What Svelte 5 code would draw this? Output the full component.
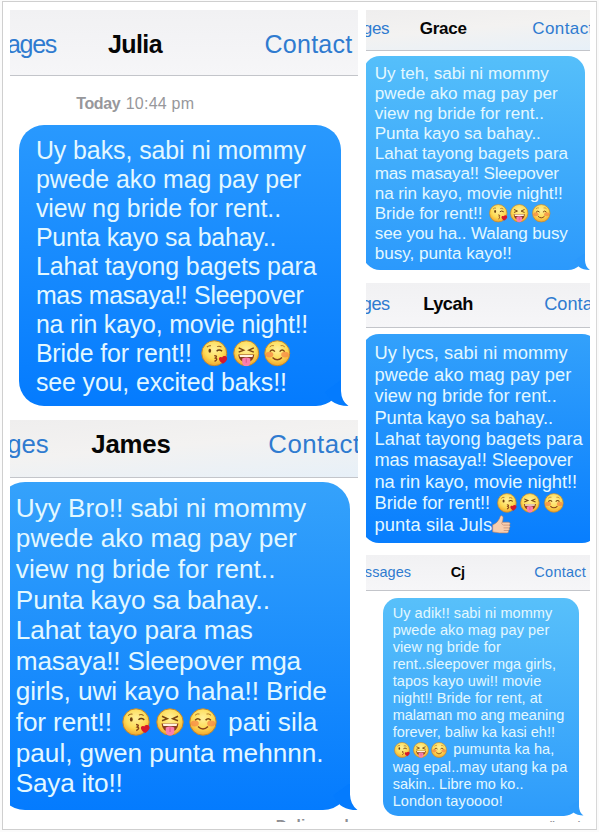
<script>
  // Text segment: [text, inkStart, inkEnd]; emoji segment: [kind, centre, size].
  const T = (text, a, b) => ({ text, a, b });
  const E = (kind, c, d) => ({ kind, a: c - d / 2, b: c + d / 2 });
  const trio = (c1, c2, c3, d) => [E('kiss', c1, d), E('tongue', c2, d), E('smile', c3, d)];

  const columns = [
    {
      x: 9.5,
      w: 348.5,
      chats: [
        {
          bar: 66, height: 410, size: 24.9, barSize: 25, base: 43, tint: 'plain',
          nav: [T('ages', 8, 55), T('Julia', 109, 161), T('Contact', 265.5, 351.5)],
          stamp: [T('Today', 77, 119.5), T('10:44 pm', 126.5, 193.5)],
          bubble: { x: 19, w: 322, gap: 0, h: 281, r: 25, from: '#2999fe', to: '#047bfe', pad: 10.8, lh: 29, tail: 1 },
          lines: [
            [T('Uy baks, sabi ni mommy', 37, 304.7)],
            [T('pwede ako mag pay per', 37, 300)],
            [T('view ng bride for rent..', 37, 280)],
            [T('Punta kayo sa bahay..', 37, 275)],
            [T('Lahat tayong bagets para', 37, 315.5)],
            [T('mas masaya!! Sleepover', 37, 302.5)],
            [T('na rin kayo, movie night!!', 37, 307)],
            [T('Bride for rent!!', 37, 190.7), ...trio(214.7, 246, 277, 26.5)],
            [T('see you, excited baks!!', 37, 285.7)]
          ]
        },
        {
          bar: 58.5, height: 402, size: 26.2, barSize: 25.8, base: 33.3, tint: 'warm',
          nav: [T('ges', 8.5, 47.3), T('James', 92.5, 169.5), T('Contact', 269.5, 359.5)],
          bubble: { x: -2, w: 351.5, gap: 3.5, h: 328.5, r: 27, from: '#35a2fb', to: '#047bfe', pad: 11.3, lh: 30.62, tail: 1.05 },
          lines: [
            [T('Uyy Bro!! sabi ni mommy', 17, 305)],
            [T('pwede ako mag pay per', 17, 295.7)],
            [T('view ng bride for rent..', 17, 274.3)],
            [T('Punta kayo sa bahay..', 17, 268.7)],
            [T('Lahat tayo para mas', 17, 251.7)],
            [T('masaya!! Sleepover mga', 17, 299.7)],
            [T('girls, uwi kayo haha!! Bride', 17, 325.7)],
            [T('for rent!!', 17, 110.7), ...trio(136.5, 169.7, 203, 28), T('pati sila', 229.3, 316.3)],
            [T('paul, gwen punta mehnnn.', 17, 322.3)],
            [T('Saya ito!!', 17, 121.3)]
          ],
          status: { x: 276.5, end: 348.5, size: 15.5, gap: 5.5 }
        }
      ]
    },
    {
      x: 366,
      w: 223.5,
      chats: [
        {
          bar: 41.5, height: 273.5, size: 17.1, barSize: 17, base: 25, tint: 'warm',
          nav: [T('ges', 363.5, 388.5), T('Grace', 420.5, 466), T('Contact', 533, 593)],
          bubble: { x: 362.5, w: 222.5, gap: 5, h: 214, r: 17, from: '#55bffa', to: '#2b99fc', pad: 7.6, lh: 20, tail: 0.65 },
          lines: [
            [T('Uy teh, sabi ni mommy', 375.5, 548)],
            [T('pwede ako mag pay per', 375.5, 557)],
            [T('view ng bride for rent..', 375.5, 543.3)],
            [T('Punta kayo sa bahay..', 375.5, 540)],
            [T('Lahat tayong bagets para', 375.5, 567.3)],
            [T('mas masaya!! Sleepover', 375.5, 558)],
            [T('na rin kayo, movie night!!', 375.5, 562)],
            [T('Bride for rent!!', 375.5, 481.7), ...trio(498, 519.7, 541.3, 18.5)],
            [T('see you ha.. Walang busy', 375.5, 567)],
            [T('busy, punta kayo!!', 375.5, 511)]
          ]
        },
        {
          bar: 45, height: 272, size: 18.3, barSize: 18.2, base: 27.5, tint: 'plain',
          nav: [T('ges', 362.5, 389), T('Lycah', 424, 472), T('Conta', 545, 592)],
          bubble: { x: 362, w: 237, gap: 5.5, h: 209, r: 17, from: '#33a1fb', to: '#087efe', pad: 8.8, lh: 21.42, tail: 0 },
          lines: [
            [T('Uy lycs, sabi ni mommy', 375.3, 567)],
            [T('pwede ako mag pay per', 375.3, 570.7)],
            [T('view ng bride for rent..', 375.3, 556)],
            [T('Punta kayo sa bahay..', 375.3, 552.3)],
            [T('Lahat tayong bagets para', 375.3, 582)],
            [T('mas masaya!! Sleepover', 375.3, 572)],
            [T('na rin kayo, movie night!!', 375.3, 576.3)],
            [T('Bride for rent!!', 375.3, 489.3), ...trio(507, 530.3, 553.7, 19.8)],
            [T('punta sila Juls', 375.3, 491.5), E('thumb', 502, 19)]
          ]
        },
        {
          bar: 35.5, height: 266.5, size: 14.5, barSize: 14.5, base: 22.3, tint: 'plain',
          nav: [T('ssages', 365.5, 410.5), T('Cj', 451.5, 464), T('Contact', 535, 585.5)],
          bubble: { x: 383, w: 196, gap: 7.5, h: 217.5, r: 15, from: '#58c0fa', to: '#2d9bfb', pad: 6.6, lh: 17.12, tail: 0.6 },
          lines: [
            [T('Uy adik!! sabi ni mommy', 393.3, 551.7)],
            [T('pwede ako mag pay per', 393.3, 548.7)],
            [T('view ng bride for', 393.3, 500.3)],
            [T('rent..sleepover mga girls,', 393.3, 555.3)],
            [T('tapos kayo uwi!! movie', 393.3, 540.7)],
            [T('night!! Bride for rent, at', 393.3, 541.3)],
            [T('malaman mo ang meaning', 393.3, 563.7)],
            [T('forever, baliw ka kasi eh!!', 393.3, 554.3)],
            [...trio(402.3, 420.7, 439.3, 16), T('pumunta ka ha,', 454, 553.7)],
            [T('wag epal..may utang ka pa', 393.3, 566.7)],
            [T('sakin.. Libre mo ko..', 393.3, 523)],
            [T('London tayoooo!', 393.3, 502.3)]
          ],
          status: { x: 538, end: 580, size: 9.5, gap: 3.5 }
        }
      ]
    }
  ];

  // Turns absolute ink extents into flow gaps and widths.
  function place(items, origin, size) {
    let cursor = origin;
    return items.map((it) => {
      const a = it.text ? it.a - size * 0.045 : it.a;
      const b = it.text ? it.b + size * 0.045 : it.b;
      const out = { ...it, gap: a - cursor, w: b - a };
      cursor = b;
      return out;
    });
  }

  // Tracks a run of text so that it fills its box exactly.
  function track(node, width) {
    const natural = node.firstElementChild.getBoundingClientRect().width;
    const n = node.textContent.length;
    node.style.letterSpacing = (width - natural) / n + 'px';
  }
</script>

{#snippet icon(kind)}
  {#if kind === 'thumb'}
    <svg viewBox="0 0 28 28">
      <path d="M1 14.5 C4 13 6 12 8 9.8 C10 7.5 11.5 5 12.3 2 C13 .2 16 .8 16.3 3.6 C16.5 6 15.8 8.6 15 10.6 L24 10.6 C27.3 10.8 27.5 14.3 25 14.9 C27.4 15.6 27 18.8 24.7 19 C26.4 19.8 26 22.6 23.8 22.8 C25 24 24.2 26.4 22 26.4 L11 26.4 C7 26.2 5 25 1 25Z" fill="#f7ceb0" stroke="#b98165" stroke-width=".9" />
      <path d="M16.5 14.9 H25 M17 19 H24.5 M17.3 22.8 H23.6 M15 10.7 C13.8 12.2 14.2 13.4 16 14.5" fill="none" stroke="#c78c70" stroke-width="1.1" />
    </svg>
  {:else}
    <svg viewBox="0 0 28 28">
      <circle cx="14" cy="14" r="13.2" fill="url(#skin)" stroke="#c5872a" stroke-width="1" />
      {#if kind === 'kiss'}
        <ellipse cx="9.3" cy="11.4" rx="1.4" ry="2.2" fill="#6b3d10" />
        <path d="M6.2 7.6 Q8 5.6 10.5 6.2 M17 7 Q19.5 5.8 21.6 7.6" fill="none" stroke="#9a6420" stroke-width="1.1" />
        <path d="M16.5 11.8 Q19 9.4 22.3 11.8" fill="none" stroke="#6b3d10" stroke-width="1.5" />
        <path d="M14 16.5 Q18 16.8 15.2 19 Q18.5 20 14.3 22.6" fill="none" stroke="#8a431a" stroke-width="1.5" />
        <path d="M23.2 25 C17 21.8 18.3 16.6 22.2 18.4 C24.8 14.9 29 18.2 27.2 21 C26.3 22.8 24.8 24 23.2 25Z" fill="#d7192b" />
      {:else if kind === 'tongue'}
        <path d="M6 8.3 L11.3 10.7 L6 12.8 M22 8.3 L16.7 10.7 L22 12.8" fill="none" stroke="#7a4713" stroke-width="1.5" />
        <path d="M5.5 15.4 H22.5 Q21.5 23.8 14 23.8 Q6.5 23.8 5.5 15.4Z" fill="#8b3d1c" />
        <path d="M6.8 15.8 H21.2 L20.6 18 H7.4Z" fill="#fff3df" />
        <path d="M9.7 19.6 Q14 17.3 18.3 19.6 V23.5 Q18 27.6 14 27.6 Q10 27.6 9.7 23.5Z" fill="#fb7fae" />
        <path d="M14 19.5 V24" stroke="#da4f83" stroke-width=".9" />
      {:else}
        <ellipse cx="5.8" cy="15.4" rx="4" ry="3" fill="#f78345" opacity=".7" />
        <ellipse cx="22.2" cy="15.4" rx="4" ry="3" fill="#f78345" opacity=".7" />
        <path d="M6 7.3 Q8 5.2 10.5 6 M17.5 6 Q20 5.2 22 7.3" fill="none" stroke="#b27a2b" stroke-width="1" />
        <path d="M6.2 12.3 Q8.8 9 11.4 12.3 M16.6 12.3 Q19.2 9 21.8 12.3" fill="none" stroke="#7a4713" stroke-width="1.5" />
        <path d="M9 18.5 Q14 23.4 19 18.5" fill="none" stroke="#8a431a" stroke-width="1.5" />
      {/if}
    </svg>
  {/if}
{/snippet}

{#snippet run(items, origin, size)}
  {#each place(items, origin, size) as s}
    {#if s.text}
      <span class="text" style="margin-left:{s.gap}px;width:{s.w}px" use:track={s.w}><span>{s.text}</span></span>
    {:else}
      <span class="emoji" style="margin-left:{s.gap}px;width:{s.w}px;height:{s.w}px">{@render icon(s.kind)}</span>
    {/if}
  {/each}
{/snippet}

<div class="page">
  <svg class="defs" width="0" height="0">
    <defs>
      <radialGradient id="skin" cx=".5" cy=".35" r=".65">
        <stop offset="0" stop-color="#fff09a" />
        <stop offset=".6" stop-color="#fddb55" />
        <stop offset="1" stop-color="#f2a52c" />
      </radialGradient>
    </defs>
  </svg>
  <div class="frame">
    {#each columns as col}
      <div class="column" style="width:{col.w}px">
        {#each col.chats as chat}
          <section style="height:{chat.height}px">
            <header class={chat.tint} style="height:{chat.bar}px;font-size:{chat.barSize}px;line-height:{2 * (chat.base - chat.barSize * 0.3465)}px">
              {@render run(chat.nav, col.x, chat.barSize)}
            </header>
            {#if chat.stamp}
              <div class="stamp">{@render run(chat.stamp, col.x, 16)}</div>
            {/if}
            <div
              class="bubble"
              style="margin:{chat.bubble.gap}px 0 0 {chat.bubble.x - col.x}px;width:{chat.bubble.w}px;height:{chat.bubble.h}px;border-radius:{chat.bubble.r}px;padding-top:{chat.bubble.pad}px;background-image:linear-gradient({chat.bubble.from},{chat.bubble.to});font-size:{chat.size}px;line-height:{chat.bubble.lh}px"
            >
              {#each chat.lines as line}
                <div class="line" style="height:{chat.bubble.lh}px">{@render run(line, chat.bubble.x, chat.size)}</div>
              {/each}
              {#if chat.bubble.tail}
                <svg class="tail" viewBox="0 0 28 26" style="width:{28 * chat.bubble.tail}px;height:{26 * chat.bubble.tail}px;right:{-8 * chat.bubble.tail}px">
                  <path d="M20 0 V11 Q20.3 21 27.5 26 Q17 26 10.5 21 L4 12Z" fill={chat.bubble.to} />
                </svg>
              {/if}
            </div>
            {#if chat.status}
              <div class="status" style="margin-top:{chat.status.gap}px;font-size:{chat.status.size}px">
                {@render run([T('Delivered', chat.status.x, chat.status.end)], col.x, chat.status.size)}
              </div>
            {/if}
          </section>
        {/each}
      </div>
    {/each}
  </div>
</div>

<style>
  :global(body) {
    background: #fbfbfb;
  }
  .page {
    box-sizing: border-box;
    width: 599px;
    height: 832px;
    padding: 1px 2px 2px 2px;
    overflow: hidden;
    font-family: 'Liberation Sans', Arial, sans-serif;
  }
  .defs {
    position: absolute;
  }
  .frame {
    box-sizing: border-box;
    height: 829px;
    border: 1px solid #cfcfcf;
    border-right-color: #d8d8d8;
    background: #fff;
    padding: 7.5px 0 0 6.5px;
    display: flex;
    gap: 8px;
  }
  .column {
    flex: none;
    height: 812px;
    overflow: hidden;
  }
  section {
    overflow: hidden;
  }
  header {
    box-sizing: border-box;
    display: flex;
    border-bottom: 1px solid #c3c5ca;
    color: #2f7bd0;
    overflow: hidden;
  }
  .plain {
    background: linear-gradient(#f1f1f3, #f6f6f8);
  }
  .warm {
    background: linear-gradient(175deg, #efeeee 0%, #f3f2f1 45%, #e7f0f8 100%);
  }
  header > :global(:nth-child(2)) {
    color: #060606;
    font-weight: 700;
  }
  .text {
    flex: none;
    white-space: pre;
  }
  .emoji {
    flex: none;
    align-self: center;
    display: flex;
  }
  .emoji svg {
    display: block;
    width: 100%;
    height: 100%;
    overflow: visible;
  }
  .stamp {
    display: flex;
    height: 49.5px;
    font-size: 16px;
    line-height: 55px;
    color: #97979b;
  }
  .stamp > :global(:first-child) {
    font-weight: 700;
  }
  .bubble {
    position: relative;
    box-sizing: border-box;
    color: #e3f8ff;
  }
  .line {
    display: flex;
  }
  .tail {
    position: absolute;
    bottom: 0;
  }
  .status {
    display: flex;
    line-height: 1.2;
    color: #8e8e93;
    font-weight: 700;
  }
</style>
